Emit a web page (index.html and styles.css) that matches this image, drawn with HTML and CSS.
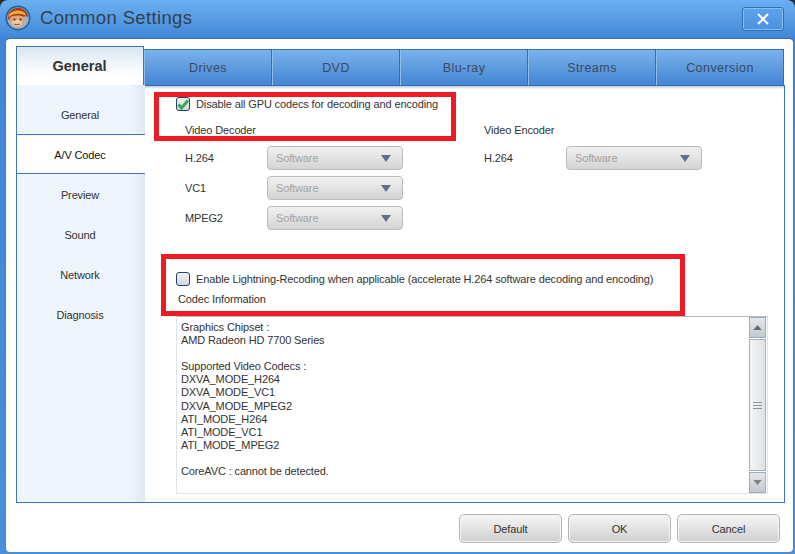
FILE: index.html
```html
<!DOCTYPE html>
<html lang="en">
<head>
<meta charset="utf-8">
<title>Common Settings</title>
<link rel="stylesheet" href="styles.css">
</head>
<body>
<div class="window">
  <header class="titlebar">
    <svg class="logo" viewBox="0 0 26 26" width="26" height="26">
      <circle cx="13" cy="13" r="12.5" fill="#2f5f8c"/>
      <circle cx="13" cy="13" r="10.8" fill="#8fb4d4"/>
      <path d="M3 14C2 6 9 2 15 3c5 1 8 5 8 9l-3-1-3 2-6-1-4 4z" fill="#a83a22"/>
      <path d="M3.5 10C7 5 15 4 20 8l1 3c-5-3-11-3-16 0l-1 2z" fill="#e6b030"/>
      <path d="M5 13c2-3 10-3 14-1 2 2 1 6-1 8-2 3-7 3-10 1-2-2-4-5-3-8z" fill="#dfa27c"/>
      <ellipse cx="12" cy="18" rx="5" ry="3.4" fill="#f0c8a6"/>
      <circle cx="9.5" cy="14.5" r="1.1" fill="#4a2415"/>
      <circle cx="15.5" cy="14.5" r="1.1" fill="#4a2415"/>
      <path d="M9 19q3 1.6 6 0" stroke="#8c4a2c" fill="none"/>
    </svg>
    <h1 class="title">Common Settings</h1>
    <button class="close" type="button" aria-label="Close">
      <svg viewBox="0 0 14 12" width="14" height="12"><path d="M2 1l10 10M12 1L2 11" stroke="#fff" stroke-width="2" fill="none"/></svg>
    </button>
  </header>
  <div class="client">
    <nav class="tabs">
      <div class="tab active">General</div>
      <div class="tab">Drives</div>
      <div class="tab">DVD</div>
      <div class="tab">Blu-ray</div>
      <div class="tab">Streams</div>
      <div class="tab">Conversion</div>
    </nav>
    <div class="panel">
      <aside class="side">
        <div class="side-item">General</div>
        <div class="side-item current">A/V Codec</div>
        <div class="side-item">Preview</div>
        <div class="side-item">Sound</div>
        <div class="side-item">Network</div>
        <div class="side-item">Diagnosis</div>
      </aside>
      <main class="content">
        <div class="mark mark-one"></div>
        <div class="mark mark-two"></div>
        <label class="check check-gpu">
          <span class="box">
            <svg viewBox="0 0 14 14" width="14" height="14"><path d="M2.5 7.5l3 3.5L12 3.5" stroke="#3aa850" stroke-width="3" fill="none"/></svg>
          </span>
          Disable all GPU codecs for decoding and encoding
        </label>
        <div class="codecs">
          <section class="decoder">
            <div class="heading">Video Decoder</div>
            <div class="row"><span class="name">H.264</span><div class="combo">Software<i class="arrow"></i></div></div>
            <div class="row"><span class="name">VC1</span><div class="combo">Software<i class="arrow"></i></div></div>
            <div class="row"><span class="name">MPEG2</span><div class="combo">Software<i class="arrow"></i></div></div>
          </section>
          <section class="encoder">
            <div class="heading">Video Encoder</div>
            <div class="row"><span class="name">H.264</span><div class="combo">Software<i class="arrow"></i></div></div>
          </section>
        </div>
        <label class="check check-lightning">
          <span class="box"></span>
          Enable Lightning-Recoding when applicable (accelerate H.264 software decoding and encoding)
        </label>
        <div class="info-title">Codec Information</div>
        <div class="info">
          <div class="info-text">Graphics Chipset :
AMD Radeon HD 7700 Series

Supported Video Codecs :
DXVA_MODE_H264
DXVA_MODE_VC1
DXVA_MODE_MPEG2
ATI_MODE_H264
ATI_MODE_VC1
ATI_MODE_MPEG2

CoreAVC : cannot be detected.</div>
          <div class="scrollbar">
            <div class="sb-btn"><svg viewBox="0 0 10 6" width="9" height="5"><path d="M5 0l5 6H0z" fill="#5f6b78"/></svg></div>
            <div class="sb-thumb"><i></i><i></i><i></i></div>
            <div class="sb-btn"><svg viewBox="0 0 10 6" width="9" height="5"><path d="M0 0h10L5 6z" fill="#7a828c"/></svg></div>
          </div>
        </div>
      </main>
    </div>
    <footer class="actions">
      <button class="btn" type="button">Default</button>
      <button class="btn" type="button">OK</button>
      <button class="btn" type="button">Cancel</button>
    </footer>
  </div>
</div>
</body>
</html>
```
FILE: styles.css
```css
* { box-sizing: border-box; }
html, body { margin: 0; padding: 0; background: #2b2b2b; }
body { width: 795px; height: 554px; overflow: hidden; font-family: "Liberation Sans", Arial, sans-serif; }
.window {
  width: 795px; height: 554px; display: flex; flex-direction: column;
  background: linear-gradient(#6cb0f2 0, #3f86d6 39px, #4a8fda 100%);
  border-radius: 8px 8px 0 0; padding: 0 2px 2px 6px;
}
.titlebar { height: 39px; flex: none; display: flex; align-items: center; margin-left: -1px; }
.logo { flex: none; display: block; margin-top: -3px; }
.title { margin: -4px 0 0 9px; font-size: 18.5px; font-weight: 400; color: #33414f; letter-spacing: .35px; flex: 1; }
.close {
  width: 42px; height: 24px; margin: -2px 9px 0 0; padding: 0; display: flex; align-items: center; justify-content: center;
  background: linear-gradient(#5ea4ec, #4b90de); border: 1px solid #2d6fb8; border-radius: 3px;
  box-shadow: inset 0 0 0 1px #86bdf2;
}
.client {
  flex: 1; background: #fff; border-radius: 4px; padding: 7px 9px 0 10px;
  display: flex; flex-direction: column; box-shadow: 0 -1px 2px #3a6ea8;
}
.tabs { display: flex; height: 39px; align-items: flex-end; flex: none; width: 768px; }
.tab {
  width: 128px; height: 36px; display: flex; align-items: center; justify-content: center;
  font-size: 12.5px; letter-spacing: .45px; color: #3a4a5c;
  background: linear-gradient(#79b2ec, #4486d4);
  border: 1px solid #2f6fb4; border-bottom: 0; border-left-color: #8dbdee; padding-top: 1px;
}
.tab.active {
  height: 39px; font-weight: 700; font-size: 14.5px; color: #333; letter-spacing: 0; padding: 0 1px 1px 0;
  background: linear-gradient(#dbe6f1, #fff 75%); border-color: #3a75b8; border-bottom: 0;
}
.panel {
  width: 769px; height: 418px; display: flex; flex: none;
  border: 1px solid #3a78c2; border-top: 0;
  box-shadow: inset 0 1px 0 #3a6fa8, inset 0 4px 3px -2px #9db4cc;
}
.side { width: 128px; flex: none; background: linear-gradient(90deg, #eef5fd 88%, #dde8f5); padding-top: 9px; }
.side-item {
  height: 40px; display: flex; align-items: center; justify-content: center;
  font-size: 11px; letter-spacing: -.13px; color: #333; padding: 2px 2px 0 0;
}
.side-item.current { background: #fff; color: #111; border-top: 1px solid #3a78c2; border-bottom: 1px solid #3a78c2; }
.content { position: relative; flex: 1; padding: 11px 0 0 31px; font-size: 11px; letter-spacing: -.13px; color: #333; min-width: 0; }
.mark { position: absolute; border: 5px solid #ed1c24; pointer-events: none; }
.mark-one { left: 9px; top: 7px; width: 302px; height: 49px; }
.mark-two { left: 16px; top: 169px; width: 524px; height: 62px; }
.check { display: flex; align-items: center; height: 16px; gap: 6px; }
.box {
  width: 14px; height: 14px; flex: none; border: 1px solid #24405f; border-radius: 3px;
  background: linear-gradient(#eef1f5, #d3d9e2); display: block; position: relative;
}
.box svg { display: block; position: absolute; left: -1px; top: -1px; }
.codecs { display: flex; }
.decoder { width: 308px; padding-left: 9px; }
.encoder { flex: 1; }
.heading { height: 26px; padding-top: 11px; line-height: 14px; }
.row { display: flex; align-items: center; height: 24px; margin-bottom: 6px; margin-top: 8px; }
.row + .row { margin-top: 0; }
.name { width: 82px; }
.combo {
  width: 136px; height: 24px; position: relative; display: flex; align-items: center; padding-left: 8px;
  border: 1px solid #bcbcbc; border-radius: 4px; color: #a3a3a3;
  background: linear-gradient(#f1f1f1, #d4d4d4);
}
.arrow {
  position: absolute; right: 11px; top: 8px; width: 0; height: 0;
  border-left: 5px solid transparent; border-right: 5px solid transparent; border-top: 7px solid #5f7088;
}
.check-lightning { margin-top: 35px; }
.info-title { margin-left: 2px; margin-top: 4px; height: 16px; line-height: 16px; }
.info {
  width: 592px; height: 178px; margin-top: 9px; display: flex;
  border: 1px solid #dfe3ea; border-top-color: #b8bcc4; background: #fff;
}
.info-text { flex: 1; white-space: pre-line; padding: 4px; line-height: 13.1px; color: #333; }
.scrollbar { width: 18px; flex: none; display: flex; flex-direction: column; gap: 1px; padding: 0 1px 0 0; }
.sb-btn {
  height: 21px; flex: none; display: flex; align-items: center; justify-content: center;
  background: linear-gradient(#e4e7ec, #c3c9d2); border: 1px solid #9eacc0;
}
.sb-thumb {
  flex: 1; display: flex; flex-direction: column; align-items: center; justify-content: center; gap: 2px;
  background: linear-gradient(90deg, #f4f5f7, #dfe2e6); border: 1px solid #9eb0c8;
}
.sb-thumb i { display: block; width: 9px; height: 1px; background: #8c95a0; }
.actions { flex: 1; display: flex; justify-content: flex-end; align-items: flex-start; gap: 6px; padding: 11px 5px 0 0; width: 769px; }
.btn {
  width: 103px; height: 29px; font: 11px "Liberation Sans", Arial, sans-serif; letter-spacing: -.13px; color: #333;
  border: 1px solid #b4b4b4; border-radius: 5px;
  background: linear-gradient(#f6f6f6, #cfcfcf);
  box-shadow: inset 0 0 0 1px #f5f5f5;
}
```
